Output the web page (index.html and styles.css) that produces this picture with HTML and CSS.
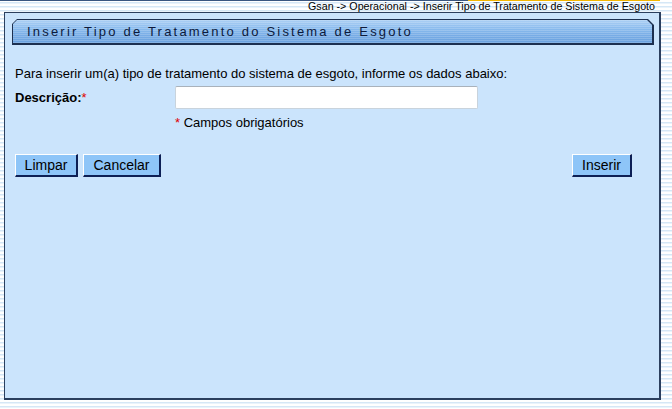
FILE: index.html
```html
<!DOCTYPE html>
<html lang="pt">
<head>
<meta charset="utf-8">
<title>Inserir Tipo de Tratamento do Sistema de Esgoto</title>
<link rel="stylesheet" href="styles.css">
</head>
<body>
<div class="header">
  <div class="crumbs"><a href="#">Gsan</a> -&gt; <a href="#">Operacional</a> -&gt; <a href="#">Inserir Tipo de Tratamento de Sistema de Esgoto</a></div>
</div>
<div class="panel">
  <div class="title-outer">
    <div class="title-inner">Inserir Tipo de Tratamento do Sistema de Esgoto</div>
  </div>
  <div class="form">
    <p class="intro">Para inserir um(a) tipo de tratamento do sistema de esgoto, informe os dados abaixo:</p>
    <div class="row field-row">
      <label class="label" for="desc">Descrição:<span class="req">*</span></label>
      <input class="field" id="desc" type="text">
    </div>
    <div class="row note-row">
      <span class="spacer"></span>
      <span class="note"><span class="req">*</span> Campos obrigatórios</span>
    </div>
    <div class="actions">
      <div class="left">
        <button class="btn btn-limpar">Limpar</button>
        <button class="btn btn-cancelar">Cancelar</button>
      </div>
      <button class="btn btn-inserir">Inserir</button>
    </div>
  </div>
</div>
</body>
</html>
```
FILE: styles.css
```css
html, body {
  margin: 0;
  padding: 0;
}
body {
  width: 672px;
  height: 409px;
  overflow: hidden;
  font-family: "Liberation Sans", Arial, sans-serif;
  background: repeating-linear-gradient(180deg, #ffffff 0 2px, #d5e7f6 2px 3px, #eaf3fb 3px 4px);
}
.header {
  height: 12px;
  background:
    linear-gradient(90deg, #3a5680 0 468px, #f3b500 468px 660px, transparent 660px) top left / 100% 1px no-repeat;
  display: flex;
  justify-content: flex-end;
  padding-right: 17px;
}
.crumbs {
  font-size: 10.7px;
  line-height: 12px;
  color: #000;
  white-space: nowrap;
}
.crumbs a {
  color: #000;
  text-decoration: none;
}
.panel {
  margin-left: 4px;
  width: 654px;
  height: 379px;
  background: #cbe4fc;
  border: 1px solid #2b3f5e;
  border-right-width: 2px;
  border-bottom-width: 2px;
  padding: 6px 0 0 0;
  box-sizing: content-box;
}
.title-outer {
  margin-left: 7px;
  width: 642px;
  height: 26px;
  box-sizing: border-box;
  background: #1d3050;
  padding: 1px 2px 2px 1px;
  clip-path: polygon(5px 0, calc(100% - 6px) 0, 100% 6px, 100% 100%, 0 100%, 0 5px);
}
.title-inner {
  height: 100%;
  clip-path: polygon(4px 0, calc(100% - 5px) 0, 100% 5px, 100% 100%, 0 100%, 0 4px);
  background:
    repeating-linear-gradient(180deg, rgba(255,255,255,0.18) 0 1px, rgba(255,255,255,0) 1px 2px),
    linear-gradient(180deg, #acd0f4 0%, #8bbcee 35%, #76abe5 70%, #6aa1de 100%);
  font-size: 13px;
  letter-spacing: 2.2px;
  color: #0c1a3c;
  line-height: 23px;
  padding-left: 14px;
  box-sizing: border-box;
}
.form {
  width: 617px;
  padding-left: 10px;
  font-size: 13px;
  color: #000;
}
.intro {
  margin: 0;
  padding-top: 21px;
  line-height: 16px;
}
.row {
  display: flex;
  align-items: center;
}
.field-row {
  margin-top: 4px;
}
.label {
  width: 160px;
  font-weight: bold;
}
.req {
  color: #e00000;
  font-weight: normal;
}
.field {
  width: 303px;
  height: 23px;
  box-sizing: border-box;
  border: 1px solid #c9d3dc;
  border-top-color: #a9b2bb;
  border-radius: 2px;
  background: #fff;
  margin: 0;
  padding: 0 3px;
}
.note-row {
  margin-top: 6px;
}
.spacer {
  width: 160px;
}
.note {
  line-height: 16px;
}
.actions {
  display: flex;
  justify-content: space-between;
  margin-top: 23px;
}
.left {
  display: flex;
  gap: 5px;
}
.btn {
  font-family: "Liberation Sans", Arial, sans-serif;
  font-size: 14px;
  color: #000;
  background: #8ec5f8;
  height: 23px;
  padding: 0;
  margin: 0;
  border-style: solid;
  border-width: 1px 2px 2px 1px;
  border-color: #ffffff #0d1f55 #0d1f55 #ffffff;
  box-sizing: border-box;
}
.btn-limpar { width: 63px; }
.btn-cancelar { width: 78px; }
.btn-inserir { width: 60px; }
```
